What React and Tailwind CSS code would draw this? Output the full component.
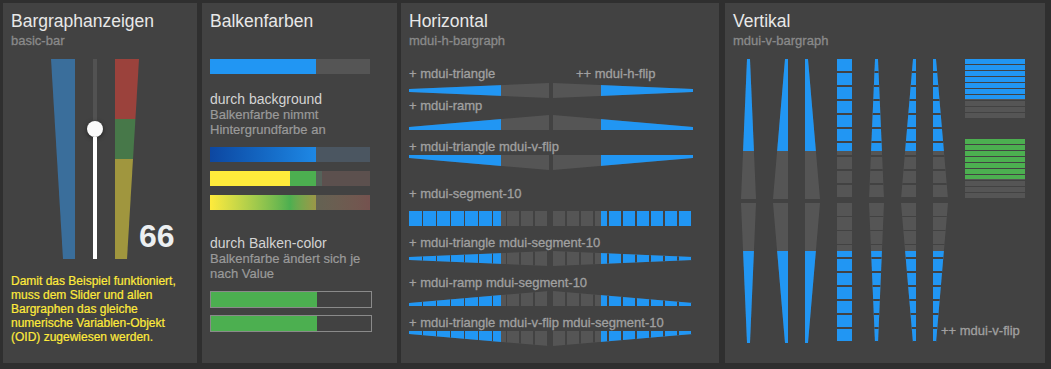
import React from 'react';

const SEG_H = 'bg-[repeating-linear-gradient(to_right,transparent_0_12.5px,#424242_12.5px_14px)]';
const SEG_V = 'bg-[repeating-linear-gradient(to_bottom,transparent_0_12.5px,#424242_12.5px_14px)]';
const SEG_BOX = 'bg-[repeating-linear-gradient(to_bottom,transparent_0_5px,#424242_5px_6px)]';

// small grey captions, a touch heavier than plain regular
const label = 'text-[13px] leading-[14px] text-[#a0a0a0] whitespace-nowrap [-webkit-text-stroke:0.3px_currentColor]';

const Header = ({ title, sub }) => (
  <div>
    <div className="text-[17.5px] leading-5 text-[#e8e8e8]">{title}</div>
    <div className="mt-[3px] h-[14px] text-[13px] leading-[14px] text-[#8a8a8a] [-webkit-text-stroke:0.3px_currentColor]">{sub}</div>
  </div>
);

// horizontal bargraph, 140px wide
const HBar = ({ clip = '', flip, seg }) => (
  <div className={`relative flex h-[15px] w-[140px] bg-[#555] ${flip ? 'justify-end' : ''} ${clip}`}>
    <div className="h-full w-[66%] bg-[#2196f3]" />
    {seg && <div className={`absolute inset-0 ${SEG_H}`} />}
  </div>
);

const HRow = ({ left, right, seg }) => (
  <div className="flex gap-1">
    <HBar clip={left} seg={seg} />
    <HBar clip={right} seg={seg} flip />
  </div>
);

// vertical bargraph, 140px high
const VBar = ({ clip = '', bottom, seg }) => (
  <div className={`relative flex h-[140px] w-[15px] flex-col bg-[#555] ${bottom ? 'justify-end' : ''} ${clip}`}>
    <div className="h-[66%] w-full bg-[#2196f3]" />
    {seg && <div className={`absolute inset-0 ${SEG_V}`} />}
  </div>
);

const Box = ({ fill }) => (
  <div className="relative flex h-[60px] w-[60px] flex-col bg-[#555]">
    <div className={`h-[40px] w-full ${fill}`} />
    <div className={`absolute inset-0 ${SEG_BOX}`} />
  </div>
);

const clips = {
  hTri: '[clip-path:polygon(0_40%,100%_0,100%_100%,0_60%)]',
  hTriF: '[clip-path:polygon(0_0,100%_40%,100%_60%,0_100%)]',
  hRamp: '[clip-path:polygon(0_80%,100%_0,100%_100%,0_100%)]',
  hRampF: '[clip-path:polygon(0_0,100%_80%,100%_100%,0_100%)]',
  hVTri: '[clip-path:polygon(0_0,100%_0,100%_100%,0_20%)]',
  hVTriF: '[clip-path:polygon(0_0,100%_0,100%_20%,0_100%)]',
};

const vCols = [
  { top: '[clip-path:polygon(40%_0,60%_0,100%_100%,0_100%)]', bot: '[clip-path:polygon(0_0,100%_0,60%_100%,40%_100%)]' },
  { top: '[clip-path:polygon(80%_0,100%_0,100%_100%,0_100%)]', bot: '[clip-path:polygon(0_0,100%_0,100%_100%,80%_100%)]' },
  { top: '[clip-path:polygon(0_0,20%_0,100%_100%,0_100%)]', bot: '[clip-path:polygon(0_0,100%_0,20%_100%,0_100%)]' },
  { top: '', bot: '', seg: true },
  { top: '[clip-path:polygon(40%_0,60%_0,100%_100%,0_100%)]', bot: '[clip-path:polygon(0_0,100%_0,60%_100%,40%_100%)]', seg: true },
  { top: '[clip-path:polygon(80%_0,100%_0,100%_100%,0_100%)]', bot: '[clip-path:polygon(0_0,100%_0,100%_100%,80%_100%)]', seg: true },
  { top: '[clip-path:polygon(0_0,20%_0,100%_100%,0_100%)]', bot: '[clip-path:polygon(0_0,100%_0,20%_100%,0_100%)]', seg: true },
];

export default function App() {
  return (
    <div className="flex h-[369px] w-[1051px] bg-[#2f2f2f] pl-[3px] pt-[3px] font-['Liberation_Sans',Arial,sans-serif]">
      {/* Bargraphanzeigen */}
      <div className="flex h-[360px] w-[194px] flex-col bg-[#424242] px-2 pt-2">
        <Header title="Bargraphanzeigen" sub="basic-bar" />
        <div className="ml-[40px] mt-[11px] flex items-end">
          <div className="h-[200px] w-[24px] bg-[#3a6e9b] [clip-path:polygon(0_0,100%_0,100%_100%,50%_100%)]" />
          <div className="ml-3 flex h-[200px] w-4 flex-col items-center">
            <div className="h-[62px] w-1 bg-[#525252]" />
            <div className="h-4 w-4 shrink-0 rounded-full bg-[#fafafa] shadow-[0_1px_4px_rgba(0,0,0,0.5)]" />
            <div className="w-1 flex-1 bg-white" />
          </div>
          <div className="ml-3 h-[200px] w-[24px] bg-[linear-gradient(to_bottom,#9b423c_0_30%,#477849_30%_50%,#a0963e_50%_100%)] [clip-path:polygon(0_0,100%_0,50%_100%,0_100%)]" />
          <div className="mb-[7px] text-[32px] font-bold leading-8 text-[#eceff1]">66</div>
        </div>
        <p className="mt-[15px] text-[12px] leading-[14px] text-[#ffeb3b] [-webkit-text-stroke:0.2px_currentColor]">
          Damit das Beispiel funktioniert,<br />
          muss dem Slider und allen<br />
          Bargraphen das gleiche<br />
          numerische Variablen-Objekt<br />
          (OID) zugewiesen werden.
        </p>
      </div>

      {/* Balkenfarben */}
      <div className="ml-[5px] flex h-[360px] w-[195px] flex-col bg-[#424242] px-2 pt-2">
        <Header title="Balkenfarben" sub="" />
        <div className="mt-[11px] flex h-[15px] w-[160px] bg-[#555]">
          <div className="h-full w-[66%] bg-[#2196f3]" />
        </div>
        <div className="mt-[17px] text-[14px] leading-4 text-[#d4d4d4]">durch background</div>
        <div className="text-[13px] leading-[15px] text-[#9a9a9a] [-webkit-text-stroke:0.2px_currentColor]">
          Balkenfarbe nimmt<br />Hintergrundfarbe an
        </div>
        <div className="mt-[10px] flex h-[15px] w-[160px] bg-[#4b5661]">
          <div className="h-full w-[66%] bg-linear-to-r from-[#0d47a1] to-[#1e88e5]" />
        </div>
        <div className="mt-[9px] flex h-[15px] w-[160px]">
          <div className="h-full w-[80px] bg-[#ffeb3b]" />
          <div className="h-full w-[26px] bg-[#4caf50]" />
          <div className="h-full w-[6px] bg-[#55625a]" />
          <div className="h-full flex-1 bg-[#5c504e]" />
        </div>
        <div className="relative mt-[9px] flex h-[15px] w-[160px] bg-[#555]">
          <div className="absolute inset-0 bg-linear-to-r from-[#ffeb3b] via-[#4caf50] to-[#f44336] opacity-20" />
          <div className="relative h-full w-[66%] overflow-hidden">
            <div className="h-full w-[160px] bg-linear-to-r from-[#ffeb3b] via-[#4caf50] to-[#f44336]" />
          </div>
        </div>
        <div className="mt-[25px] text-[14px] leading-4 text-[#d4d4d4]">durch Balken-color</div>
        <div className="text-[13px] leading-[15px] text-[#9a9a9a] [-webkit-text-stroke:0.2px_currentColor]">
          Balkenfarbe ändert sich je<br />nach Value
        </div>
        <div className="mt-[10px] h-[17px] w-[162px] border border-[#8a8a8a]">
          <div className="h-full w-[66%] bg-[#4caf50]" />
        </div>
        <div className="mt-[7px] h-[17px] w-[162px] border border-[#8a8a8a]">
          <div className="h-full w-[66%] bg-[#4caf50]" />
        </div>
      </div>

      {/* Horizontal */}
      <div className="ml-[4px] flex h-[360px] w-[318px] flex-col bg-[#424242] px-2 pt-2">
        <Header title="Horizontal" sub="mdui-h-bargraph" />
        <div className="mt-[19px] flex">
          <div className={`w-[167px] ${label}`}>+ mdui-triangle</div>
          <div className={label}>++ mdui-h-flip</div>
        </div>
        <div className="mt-[2px]">
          <HRow left={clips.hTri} right={clips.hTriF} />
        </div>
        <div className={`mt-[1px] ${label}`}>+ mdui-ramp</div>
        <div className="mt-[2px]">
          <HRow left={clips.hRamp} right={clips.hRampF} />
        </div>
        <div className={`mt-[10px] ${label}`}>+ mdui-triangle mdui-v-flip</div>
        <div className="mt-[1px]">
          <HRow left={clips.hVTri} right={clips.hVTriF} />
        </div>

        <div className={`mt-[17px] ${label}`}>+ mdui-segment-10</div>
        <div className="mt-[10px]">
          <HRow seg />
        </div>
        <div className={`mt-[10px] ${label}`}>+ mdui-triangle mdui-segment-10</div>
        <div className="mt-[1px]">
          <HRow left={clips.hTri} right={clips.hTriF} seg />
        </div>
        <div className={`mt-[10px] ${label}`}>+ mdui-ramp mdui-segment-10</div>
        <div className="mt-[1px]">
          <HRow left={clips.hRamp} right={clips.hRampF} seg />
        </div>
        <div className={`mt-[10px] ${label}`}>+ mdui-triangle mdui-v-flip mdui-segment-10</div>
        <div className="mt-[1px]">
          <HRow left={clips.hVTri} right={clips.hVTriF} seg />
        </div>
      </div>

      {/* Vertikal */}
      <div className="relative ml-[6px] flex h-[360px] w-[320px] flex-col bg-[#424242] px-2 pt-2">
        <Header title="Vertikal" sub="mdui-v-bargraph" />
        <div className="ml-[8px] mt-[11px] flex gap-[17px]">
          {vCols.map((c, i) => (
            <div key={i} className="flex flex-col gap-1">
              <VBar clip={c.top} seg={c.seg} />
              <VBar clip={c.bot} seg={c.seg} bottom />
            </div>
          ))}
          <div className="flex flex-col gap-5">
            <Box fill="bg-[#2196f3]" />
            <Box fill="bg-[#4caf50]" />
          </div>
        </div>
        <div className={`absolute left-[216px] top-[321px] ${label}`}>++ mdui-v-flip</div>
      </div>
    </div>
  );
}
